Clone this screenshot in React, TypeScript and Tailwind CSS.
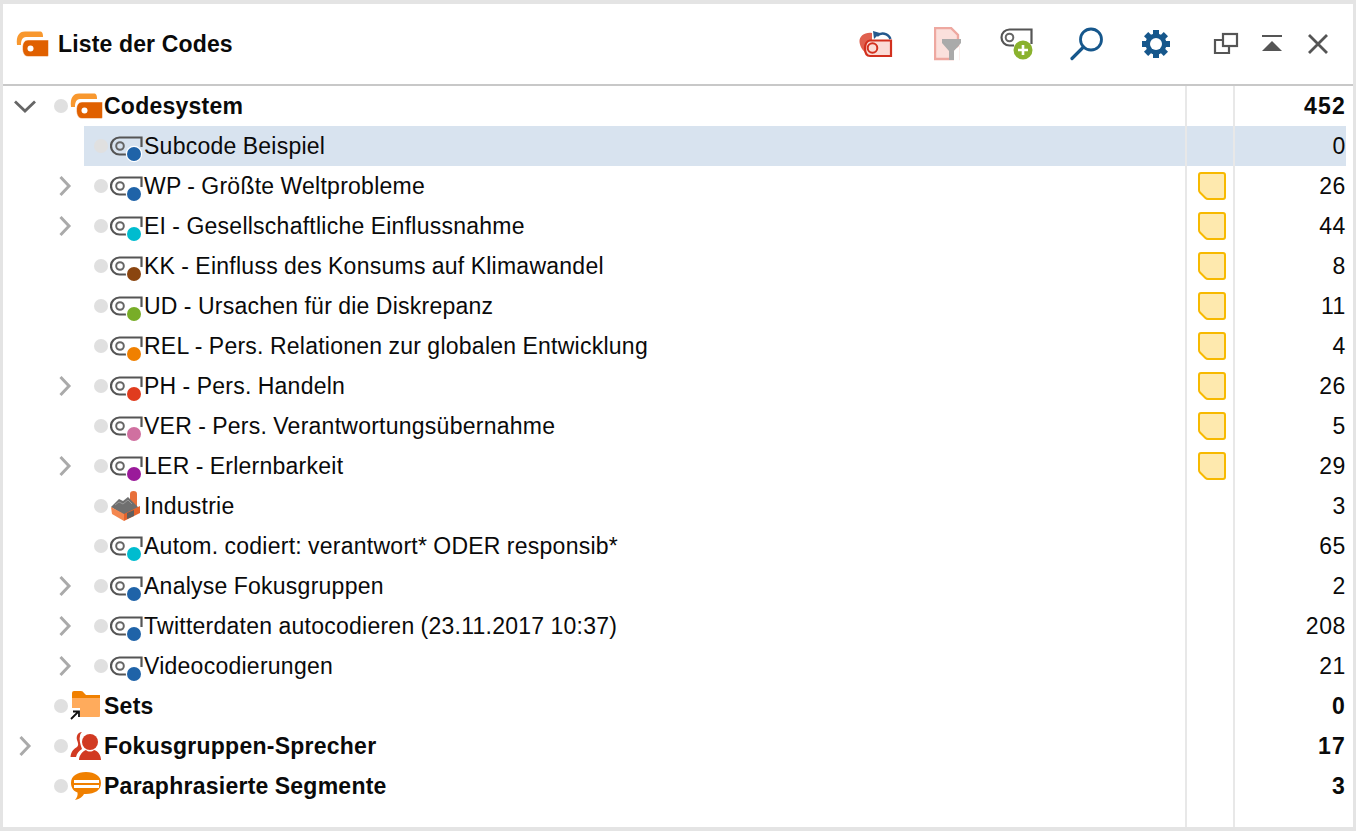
import React from "react";

const Sep = "border-l-2 border-[#e8e8e8]";

function Orange() {
  return (
    <svg width="34" height="26" viewBox="0 0 34 26" className="shrink-0">
      <path d="M1 14 C0 5 3 0.500 9 0.500 H24 C26 0.500 27 2 27 6 H10 C6 6 5 10 5 14 Z" fill="#f8982f" />
      <path d="M12 9 H32.500 V24 C32.500 25 32 25.500 30.500 25.500 H12 C8.500 25.500 6.500 22 6.500 17 C6.500 12 8.500 9 12 9 Z" fill="#e06000" stroke="#fff" strokeWidth="0.500" />
      <circle cx="14.500" cy="17.500" r="3" fill="#fff" />
    </svg>
  );
}

function Tag({ c }: { c: string }) {
  return (
    <svg width="34" height="34" viewBox="0 0 34 34" className="shrink-0">
      <path d="M31.500 18 V8.500 H9.500 A8.500 8.500 0 0 0 9.500 25.500 H22" fill="none" stroke="#555" strokeWidth="2.200" />
      <circle cx="10" cy="17" r="3.800" fill="none" stroke="#666" strokeWidth="2" />
      <circle cx="24" cy="25" r="8.200" fill="#fff" />
      <circle cx="24" cy="25" r="7" fill={c} />
    </svg>
  );
}

function Factory() {
  return (
    <svg width="34" height="34" viewBox="0 0 34 34" className="shrink-0">
      <path d="M20 14 V5 Q20 2 23.500 2 Q27 2 27 5 V18 Z" fill="#e8703a" />
      <path d="M1 18 L9 10 L13 12 L18 8 L23 13 L29 19 L14 26 Z" fill="#6f6f6f" />
      <path d="M5 16 L9 13 L13 15 L18 11 L22 15" fill="none" stroke="#999" strokeWidth="1" />
      <path d="M1 18 L14 25 L14 32 L2 25 Z" fill="#f4874f" />
      <path d="M14 25 L30 17 L30 24 L14 32 Z" fill="#e5632c" />
      <path d="M17 24 L24 21 L24 27 L17 30 Z" fill="#5f5f5f" />
    </svg>
  );
}

function Folder() {
  return (
    <svg width="34" height="30" viewBox="0 0 34 30" className="shrink-0">
      <path d="M2 8 V2 Q2 0 4 0 H11 Q13 0 14 2 L16 4 H30 V8 Z" fill="#f08000" />
      <path d="M2 7 H30 V25 Q30 26 29 26 H2 Z" fill="#ffab5c" />
      <rect x="0" y="17" width="10" height="13" fill="#fff" />
      <path d="M1 28 L8 21 M3 20.500 H9 V26" fill="none" stroke="#111" strokeWidth="1.800" />
    </svg>
  );
}

function People() {
  return (
    <svg width="34" height="30" viewBox="0 0 34 30" className="shrink-0">
      <path d="M12 1 C8 1 6 5 7 9 C8 12 9 14 7 16 C4 18 1 20 0.500 26 H6 C7 22 9 20 12 18 C10 13 9 8 10 5 C10 3 11 2 12 1 Z" fill="#d13a22" />
      <circle cx="20" cy="11" r="8" fill="#d13a22" />
      <path d="M9 29 C9 24 13 20 16 19 C18 21 22 21 24 19 C28 20 31 24 31 29 Z" fill="#d13a22" />
    </svg>
  );
}

function Speech() {
  return (
    <svg width="34" height="30" viewBox="0 0 34 30" className="shrink-0">
      <path d="M16 1 C25 1 31 5 31 12 C31 19 25 23 16 23 H14 C13 25 10 28 5 29 C7 27 8 24 7.500 21.500 C3 20 1 16 1 12 C1 5 7 1 16 1 Z" fill="#f08000" />
      <rect x="4" y="9" width="25" height="3" fill="#fff" />
      <rect x="4" y="14" width="25" height="3" fill="#fff" />
    </svg>
  );
}

function Chev({ open }: { open?: boolean }) {
  return (
    <svg width="24" height="24" viewBox="0 0 24 24">
      {open ? (
        <path d="M2 7.500 L12 17 L22 7.500" fill="none" stroke="#666" strokeWidth="2.800" />
      ) : (
        <path d="M7.500 3 L16 12 L7.500 21" fill="none" stroke="#aaa" strokeWidth="3" />
      )}
    </svg>
  );
}

function Note() {
  return (
    <svg width="30" height="30" viewBox="0 0 30 30" className="block">
      <path d="M4 2 H26 Q28 2 28 4 V26 Q28 28 26 28 H11 Q9.500 28 8.500 27 L3 21.500 Q2 20.500 2 19 V4 Q2 2 4 2 Z" fill="#fee9ae" stroke="#f7b900" strokeWidth="2" />
    </svg>
  );
}

type Row = {
  label: string;
  count: number;
  depth: 0 | 1;
  chev?: "open" | "closed";
  note?: boolean;
  icon: React.ReactNode;
  selected?: boolean;
};

const B = "#1f63a8";
const rows: Row[] = [
  { label: "Codesystem", count: 452, depth: 0, chev: "open", icon: <Orange /> },
  { label: "Subcode Beispiel", count: 0, depth: 1, icon: <Tag c={B} />, selected: true },
  { label: "WP - Größte Weltprobleme", count: 26, depth: 1, chev: "closed", note: true, icon: <Tag c={B} /> },
  { label: "EI - Gesellschaftliche Einflussnahme", count: 44, depth: 1, chev: "closed", note: true, icon: <Tag c="#00bccf" /> },
  { label: "KK - Einfluss des Konsums auf Klimawandel", count: 8, depth: 1, note: true, icon: <Tag c="#8a4510" /> },
  { label: "UD - Ursachen für die Diskrepanz", count: 11, depth: 1, note: true, icon: <Tag c="#78ad28" /> },
  { label: "REL - Pers. Relationen zur globalen Entwicklung", count: 4, depth: 1, note: true, icon: <Tag c="#f08000" /> },
  { label: "PH - Pers. Handeln", count: 26, depth: 1, chev: "closed", note: true, icon: <Tag c="#e03c1e" /> },
  { label: "VER - Pers. Verantwortungsübernahme", count: 5, depth: 1, note: true, icon: <Tag c="#d070a0" /> },
  { label: "LER - Erlernbarkeit", count: 29, depth: 1, chev: "closed", note: true, icon: <Tag c="#9a1a9a" /> },
  { label: "Industrie", count: 3, depth: 1, icon: <Factory /> },
  { label: "Autom. codiert: verantwort* ODER responsib*", count: 65, depth: 1, icon: <Tag c="#00bccf" /> },
  { label: "Analyse Fokusgruppen", count: 2, depth: 1, chev: "closed", icon: <Tag c={B} /> },
  { label: "Twitterdaten autocodieren (23.11.2017 10:37)", count: 208, depth: 1, chev: "closed", icon: <Tag c={B} /> },
  { label: "Videocodierungen", count: 21, depth: 1, chev: "closed", icon: <Tag c={B} /> },
  { label: "Sets", count: 0, depth: 0, icon: <Folder /> },
  { label: "Fokusgruppen-Sprecher", count: 17, depth: 0, chev: "closed", icon: <People /> },
  { label: "Paraphrasierte Segmente", count: 3, depth: 0, icon: <Speech /> },
];

function TreeRow({ r }: { r: Row }) {
  const bold = r.depth === 0;
  return (
    <div className="flex h-10 pl-[1px] pr-[7px]">
      {r.depth === 1 && <div className="w-10 shrink-0" />}
      <div className="flex w-10 shrink-0 items-center justify-center pl-[2px]">
        {r.chev && <Chev open={r.chev === "open"} />}
      </div>
      <div className={`flex min-w-0 flex-1 ${r.selected ? "bg-[#d8e3ef]" : ""}`}>
        <div className="flex min-w-0 flex-1 items-center pl-[10px]">
          <span className="mr-[2px] h-[14px] w-[14px] shrink-0 rounded-full bg-[#e0e0e0]" />
          {r.icon}
          <span className={`whitespace-nowrap tracking-[0.25px] [word-spacing:-0.5px] ${bold ? "font-bold" : ""}`}>{r.label}</span>
        </div>
        <div className={`flex w-12 shrink-0 items-center pl-[10px] ${Sep}`}>{r.note && <Note />}</div>
        <div className={`flex w-[113px] shrink-0 items-center justify-end ${Sep} ${bold ? "font-bold tracking-[1.2px]" : "tracking-[0.6px]"}`}>
          {r.count}
        </div>
      </div>
    </div>
  );
}

export default function App() {
  return (
    <div className="h-[831px] w-[1356px] overflow-hidden bg-[#e4e4e4] pb-[4px] pl-[3px] pr-[3px] pt-[4px]">
      <div
        className="flex h-full flex-col bg-white text-[23px] text-[#0a0a0a]"
        style={{ fontFamily: '"Liberation Sans", Arial, sans-serif' }}
      >
        <header className="flex h-[82px] shrink-0 items-center border-b-2 border-[#c8c8c8] pl-[13px]">
          <Orange />
          <h1 className="ml-[8px] whitespace-nowrap font-bold tracking-[0.15px]">Liste der Codes</h1>
          <div className="ml-auto flex items-center pr-[25px]">
            {/* restore */}
            <svg width="34" height="28" viewBox="0 0 34 28" className="mr-[41px]">
              <path d="M13 3 C6 2 0 6 0.500 12 C1 17 4 21 8 24 L8 14 C8 12 9 10 13 10 Z" fill="#e0604e" />
              <path d="M11 26 C7 26 6 22 6 18 C6 14 8 10.500 11 10.500 H32 V26 Z" fill="#fbdcd6" stroke="#d2301e" strokeWidth="2.200" />
              <circle cx="13.500" cy="18" r="4.800" fill="#fbdcd6" stroke="#d2301e" strokeWidth="2" />
              <path d="M18 6 C22 2 29 3 31.500 9" fill="none" stroke="#24588c" strokeWidth="2.400" />
              <path d="M14 1 L21 3 L15 9 Z" fill="#24588c" />
            </svg>
            {/* filter doc */}
            <svg width="28" height="34" viewBox="0 0 28 34" className="mr-[38px]">
              <path d="M1 1 H17 L24 8 V32 H1 Z" fill="#fbe0dc" stroke="#eea8a0" strokeWidth="2.400" />
              <path d="M8 12 H27 V16 L20 24 V33 L15 33 V24 L8 16 Z" fill="#aaa" />
              <path d="M20 24 L25 19 V34 H20 Z" fill="#fff" />
            </svg>
            {/* add code */}
            <svg width="34" height="32" viewBox="0 0 34 32" className="mr-[36px]">
              <path d="M31.500 16 V1.500 H9.500 A8 8 0 0 0 9.500 17.500 H14" fill="none" stroke="#555" strokeWidth="2.200" />
              <circle cx="9.500" cy="9.500" r="3.800" fill="none" stroke="#666" strokeWidth="2" />
              <circle cx="23" cy="22" r="9.500" fill="#8ab22e" />
              <path d="M23 17 V27 M18 22 H28" stroke="#fff" strokeWidth="2.600" />
            </svg>
            {/* search */}
            <svg width="34" height="34" viewBox="0 0 34 34" className="mr-[38px]">
              <circle cx="21" cy="12.500" r="10.500" fill="none" stroke="#16578c" strokeWidth="2.800" />
              <path d="M13.500 20 L2 31.500" fill="none" stroke="#16578c" strokeWidth="3.200" strokeLinecap="round" />
            </svg>
            {/* gear */}
            <svg width="28" height="28" viewBox="0 0 28 28" className="mr-[43px]">
              <g fill="#16578c">
                <rect x="11" y="0" width="6" height="28" />
                <rect x="11" y="0" width="6" height="28" transform="rotate(45 14 14)" />
                <rect x="11" y="0" width="6" height="28" transform="rotate(90 14 14)" />
                <rect x="11" y="0" width="6" height="28" transform="rotate(135 14 14)" />
              </g>
              <circle cx="14" cy="14" r="10.500" fill="#16578c" />
              <circle cx="14" cy="14" r="6" fill="#fff" />
            </svg>
            {/* window */}
            <svg width="26" height="24" viewBox="0 0 26 24" className="mr-[22px]">
              <rect x="10" y="2" width="14" height="12" fill="#fff" stroke="#555" strokeWidth="2.200" />
              <path d="M9 8 H2 V21 H16 V15" fill="none" stroke="#555" strokeWidth="2.200" />
            </svg>
            {/* collapse */}
            <svg width="22" height="18" viewBox="0 0 22 18" className="mr-[25px]">
              <rect x="1" y="0" width="20" height="2" fill="#555" />
              <path d="M11 6 L21 16 H1 Z" fill="#555" />
            </svg>
            {/* close */}
            <svg width="20" height="20" viewBox="0 0 20 20">
              <path d="M1 1 L19 19 M19 1 L1 19" stroke="#555" strokeWidth="2.800" />
            </svg>
          </div>
        </header>
        <div className="flex min-h-0 flex-1 flex-col">
          {rows.map((r) => (
            <TreeRow key={r.label} r={r} />
          ))}
          <div className="flex flex-1 justify-end pr-[7px]">
            <div className={`w-12 ${Sep}`} />
            <div className={`w-[113px] ${Sep}`} />
          </div>
        </div>
      </div>
    </div>
  );
}
